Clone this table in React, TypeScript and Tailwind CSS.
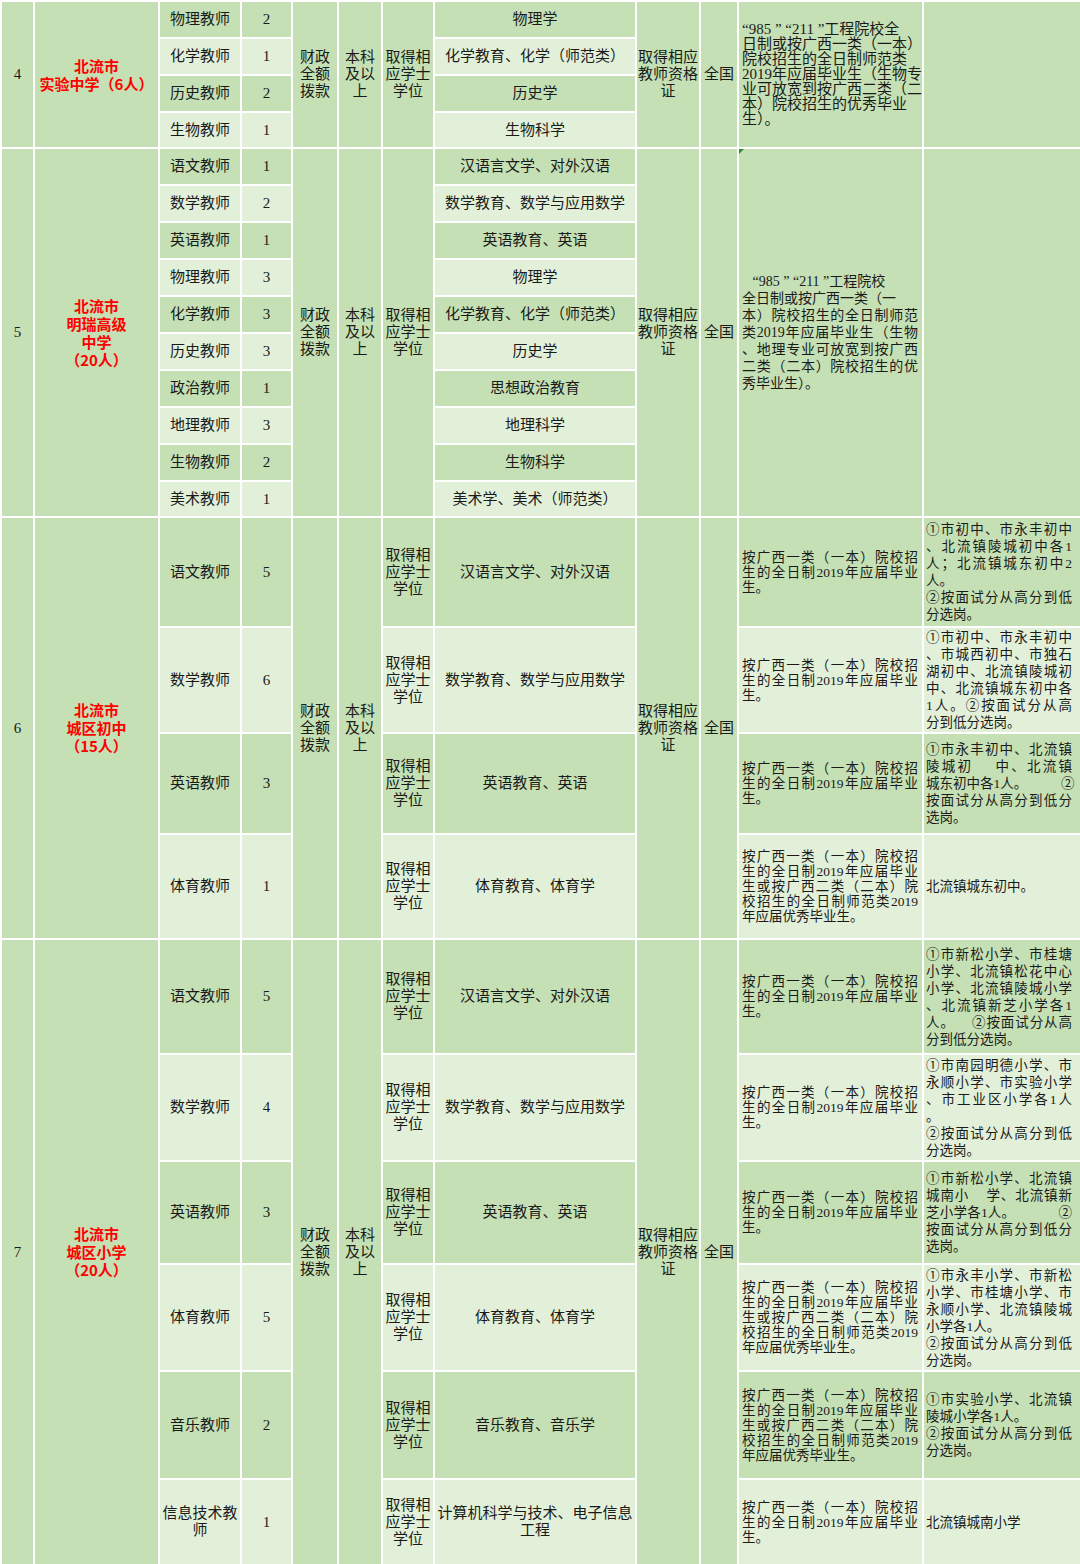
import React from 'react';

const DARK = 'bg-[#c5e0b4]';
const LIGHT = 'bg-[#e2f0d9]';
const TD = 'border-2 border-white p-0 align-middle text-center text-[15px] leading-[17px]';
const NB = '\u00a0';

type Row = {
  h: string;
  pos: string[];
  n: string;
  major: string[];
  cond?: string[];
  notes?: string[];
};

type Sec = {
  no: string;
  name: string[];
  merged: boolean;
  rows: Row[];
};

const C1 = ['按广西一类（一本）院校招', '生的全日制2019年应届毕业', '生。'];
const C2 = [
  '按广西一类（一本）院校招',
  '生的全日制2019年应届毕业',
  '生或按广西二类（二本）院',
  '校招生的全日制师范类2019',
  '年应届优秀毕业生。',
];

const SECTIONS: Sec[] = [
  {
    no: '4',
    name: ['北流市', '实验中学（6人）'],
    merged: true,
    rows: [
      { h: 'h-[37px]', pos: ['物理教师'], n: '2', major: ['物理学'] },
      { h: 'h-[37px]', pos: ['化学教师'], n: '1', major: ['化学教育、化学（师范类）'] },
      { h: 'h-[37px]', pos: ['历史教师'], n: '2', major: ['历史学'] },
      { h: 'h-[36px]', pos: ['生物教师'], n: '1', major: ['生物科学'] },
    ],
  },
  {
    no: '5',
    name: ['北流市', '明瑞高级', '中学', '（20人）'],
    merged: true,
    rows: [
      { h: 'h-[37px]', pos: ['语文教师'], n: '1', major: ['汉语言文学、对外汉语'] },
      { h: 'h-[37px]', pos: ['数学教师'], n: '2', major: ['数学教育、数学与应用数学'] },
      { h: 'h-[37px]', pos: ['英语教师'], n: '1', major: ['英语教育、英语'] },
      { h: 'h-[37px]', pos: ['物理教师'], n: '3', major: ['物理学'] },
      { h: 'h-[37px]', pos: ['化学教师'], n: '3', major: ['化学教育、化学（师范类）'] },
      { h: 'h-[37px]', pos: ['历史教师'], n: '3', major: ['历史学'] },
      { h: 'h-[37px]', pos: ['政治教师'], n: '1', major: ['思想政治教育'] },
      { h: 'h-[37px]', pos: ['地理教师'], n: '3', major: ['地理科学'] },
      { h: 'h-[37px]', pos: ['生物教师'], n: '2', major: ['生物科学'] },
      { h: 'h-[36px]', pos: ['美术教师'], n: '1', major: ['美术学、美术（师范类）'] },
    ],
  },
  {
    no: '6',
    name: ['北流市', '城区初中', '（15人）'],
    merged: false,
    rows: [
      {
        h: 'h-[110px]',
        pos: ['语文教师'],
        n: '5',
        major: ['汉语言文学、对外汉语'],
        cond: C1,
        notes: ['①市初中、市永丰初中', '、北流镇陵城初中各1', '人；北流镇城东初中2', '人。', '②按面试分从高分到低', '分选岗。'],
      },
      {
        h: 'h-[106px]',
        pos: ['数学教师'],
        n: '6',
        major: ['数学教育、数学与应用数学'],
        cond: C1,
        notes: ['①市初中、市永丰初中', '、市城西初中、市独石', '湖初中、北流镇陵城初', '中、北流镇城东初中各', '1人。②按面试分从高', '分到低分选岗。'],
      },
      {
        h: 'h-[101px]',
        pos: ['英语教师'],
        n: '3',
        major: ['英语教育、英语'],
        cond: C1,
        notes: [
          '①市永丰初中、北流镇',
          `陵城初${NB}${NB}${NB}${NB}中、北流镇`,
          `城东初中各1人。${NB.repeat(10)}②`,
          '按面试分从高分到低分',
          '选岗。',
        ],
      },
      {
        h: 'h-[105px]',
        pos: ['体育教师'],
        n: '1',
        major: ['体育教育、体育学'],
        cond: C2,
        notes: ['北流镇城东初中。'],
      },
    ],
  },
  {
    no: '7',
    name: ['北流市', '城区小学', '（20人）'],
    merged: false,
    rows: [
      {
        h: 'h-[115px]',
        pos: ['语文教师'],
        n: '5',
        major: ['汉语言文学、对外汉语'],
        cond: C1,
        notes: [
          '①市新松小学、市桂塘',
          '小学、北流镇松花中心',
          '小学、北流镇陵城小学',
          '、北流镇新芝小学各1',
          `人。${NB.repeat(4)}②按面试分从高`,
          '分到低分选岗。',
        ],
      },
      {
        h: 'h-[107px]',
        pos: ['数学教师'],
        n: '4',
        major: ['数学教育、数学与应用数学'],
        cond: C1,
        notes: ['①市南园明德小学、市', '永顺小学、市实验小学', '、市工业区小学各1人', '。', '②按面试分从高分到低', '分选岗。'],
      },
      {
        h: 'h-[103px]',
        pos: ['英语教师'],
        n: '3',
        major: ['英语教育、英语'],
        cond: C1,
        notes: [
          '①市新松小学、北流镇',
          `城南小${NB}${NB}${NB}${NB}学、北流镇新`,
          `芝小学各1人。${NB.repeat(12)}②`,
          '按面试分从高分到低分',
          '选岗。',
        ],
      },
      {
        h: 'h-[107px]',
        pos: ['体育教师'],
        n: '5',
        major: ['体育教育、体育学'],
        cond: C2,
        notes: ['①市永丰小学、市新松', '小学、市桂塘小学、市', '永顺小学、北流镇陵城', '小学各1人。', '②按面试分从高分到低', '分选岗。'],
      },
      {
        h: 'h-[108px]',
        pos: ['音乐教师'],
        n: '2',
        major: ['音乐教育、音乐学'],
        cond: C2,
        notes: ['①市实验小学、北流镇', '陵城小学各1人。', '②按面试分从高分到低', '分选岗。'],
      },
      {
        h: 'h-[86px]',
        pos: ['信息技术教', '师'],
        n: '1',
        major: ['计算机科学与技术、电子信息', '工程'],
        cond: C1,
        notes: ['北流镇城南小学'],
      },
    ],
  },
];

const SEC4_COND = [
  '“985 ” “211 ”工程院校全',
  '日制或按广西一类（一本）',
  '院校招生的全日制师范类',
  '2019年应届毕业生（生物专',
  '业可放宽到按广西二类（二',
  '本）院校招生的优秀毕业',
  '生）。',
];

const SEC5_COND = [
  `${NB}${NB}${NB}“985 ” “211 ”工程院校`,
  '全日制或按广西一类（一',
  '本）院校招生的全日制师范',
  '类2019年应届毕业生（生物',
  '、地理专业可放宽到按广西',
  '二类（二本）院校招生的优',
  '秀毕业生）。',
];
const SEC5_FLAGS = [false, false, true, true, true, true, false];

function Br({ lines }: { lines: string[] }) {
  return (
    <>
      {lines.map((l, i) => (
        <React.Fragment key={i}>
          {i > 0 && <br />}
          {l}
        </React.Fragment>
      ))}
    </>
  );
}

function Lines({ lines, mode, flags }: { lines: string[]; mode: 'auto' | 'none' | 'flags'; flags?: boolean[] }) {
  return (
    <>
      {lines.map((l, i) => {
        let j = false;
        if (mode === 'auto') j = i < lines.length - 1 && !l.endsWith('。');
        if (mode === 'flags') j = !!(flags && flags[i]);
        return (
          <div
            key={i}
            className={
              j
                ? 'whitespace-nowrap text-justify [text-align-last:justify]'
                : 'whitespace-nowrap text-left'
            }
          >
            {l}
          </div>
        );
      })}
    </>
  );
}

export default function App() {
  return (
    <div className="w-[1080px] h-[1564px] overflow-hidden bg-white font-['Liberation_Serif','Noto_Sans_CJK_SC',serif] text-[#1a1a1a]">
      <table className="w-[1080px] table-fixed border-collapse">
        <colgroup>
          <col className="w-[33px]" />
          <col className="w-[125px]" />
          <col className="w-[82px]" />
          <col className="w-[51px]" />
          <col className="w-[46px]" />
          <col className="w-[44px]" />
          <col className="w-[52px]" />
          <col className="w-[202px]" />
          <col className="w-[64px]" />
          <col className="w-[38px]" />
          <col className="w-[185px]" />
          <col className="w-[158px]" />
        </colgroup>
        <tbody>
          {SECTIONS.map((s) =>
            s.rows.map((r, i) => {
              const bg = i % 2 === 0 ? DARK : LIGHT;
              const span = s.rows.length;
              const first = i === 0;
              return (
                <tr key={s.no + '-' + i} className={r.h}>
                  {first && (
                    <td rowSpan={span} className={`${TD} ${DARK}`}>
                      {s.no}
                    </td>
                  )}
                  {first && (
                    <td
                      rowSpan={span}
                      className={`${TD} ${DARK} font-['Noto_Sans_CJK_SC',sans-serif] font-bold text-[#ff0000] text-[15.5px] leading-[18px]`}
                    >
                      <Br lines={s.name} />
                    </td>
                  )}
                  <td className={`${TD} ${bg}`}>
                    <Br lines={r.pos} />
                  </td>
                  <td className={`${TD} ${bg}`}>{r.n}</td>
                  {first && (
                    <td rowSpan={span} className={`${TD} ${DARK}`}>
                      <Br lines={['财政', '全额', '拨款']} />
                    </td>
                  )}
                  {first && (
                    <td rowSpan={span} className={`${TD} ${DARK}`}>
                      <Br lines={['本科', '及以', '上']} />
                    </td>
                  )}
                  {s.merged ? (
                    first && (
                      <td rowSpan={span} className={`${TD} ${DARK}`}>
                        <Br lines={['取得相', '应学士', '学位']} />
                      </td>
                    )
                  ) : (
                    <td className={`${TD} ${bg}`}>
                      <Br lines={['取得相', '应学士', '学位']} />
                    </td>
                  )}
                  <td className={`${TD} ${bg}`}>
                    <Br lines={r.major} />
                  </td>
                  {first && (
                    <td rowSpan={span} className={`${TD} ${DARK}`}>
                      <Br lines={['取得相应', '教师资格', '证']} />
                    </td>
                  )}
                  {first && (
                    <td rowSpan={span} className={`${TD} ${DARK}`}>
                      全国
                    </td>
                  )}
                  {s.merged ? (
                    first && (
                      <>
                        {s.no === '4' ? (
                          <td
                            rowSpan={span}
                            className="border-2 border-white bg-[#c5e0b4] align-middle pl-[3px] pr-[2px] text-[15px] leading-[15px]"
                          >
                            <Lines lines={SEC4_COND} mode="none" />
                          </td>
                        ) : (
                          <td
                            rowSpan={span}
                            className="relative border-2 border-white bg-[#c5e0b4] align-middle pl-[3px] pr-[4px] text-[14px] leading-[17px]"
                          >
                            <span className="absolute left-0 top-0 h-0 w-0 border-t-[5px] border-r-[5px] border-t-[#2f8a2f] border-r-transparent" />
                            <Lines lines={SEC5_COND} mode="flags" flags={SEC5_FLAGS} />
                          </td>
                        )}
                        <td rowSpan={span} className={`${TD} ${DARK}`} />
                      </>
                    )
                  ) : (
                    <>
                      <td className={`border-2 border-white ${bg} align-middle pl-[3px] pr-[4px] text-[13.5px] leading-[15px]`}>
                        <Lines lines={r.cond || []} mode="auto" />
                      </td>
                      <td className={`border-2 border-white ${bg} align-middle pl-[2px] pr-[8px] text-[13.5px] leading-[17px]`}>
                        <Lines lines={r.notes || []} mode="auto" />
                      </td>
                    </>
                  )}
                </tr>
              );
            })
          )}
        </tbody>
      </table>
    </div>
  );
}
